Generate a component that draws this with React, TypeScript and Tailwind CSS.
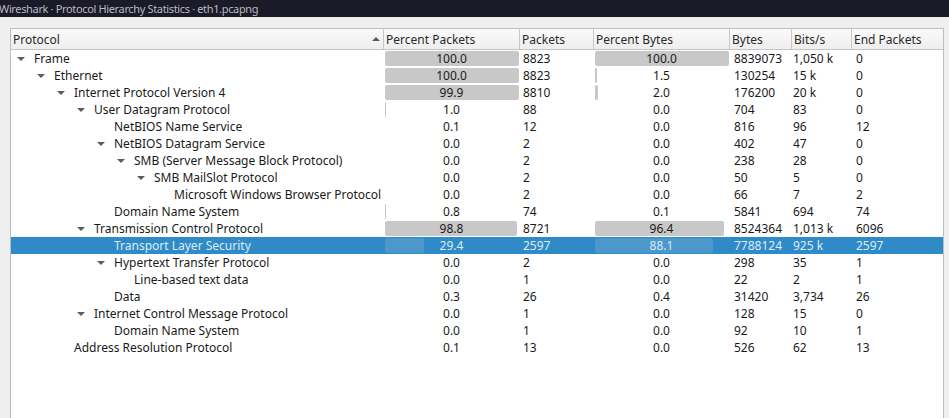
const COLUMNS = [
  { label: 'Packets', width: 'w-[74px]' },
  { label: 'Percent Bytes', width: 'w-[136px]' },
  { label: 'Bytes', width: 'w-[62px]' },
  { label: 'Bits/s', width: 'w-[60px]' },
  { label: 'End Packets', width: 'flex-1' },
];

type Row = {
  name: string;
  depth: number;
  open?: boolean;
  pctPackets: string;
  packets: string;
  pctBytes: string;
  bytes: string;
  bits: string;
  end: string;
  selected?: boolean;
};

const ROWS: Row[] = [
  { name: 'Frame', depth: 0, open: true, pctPackets: '100.0', packets: '8823', pctBytes: '100.0', bytes: '8839073', bits: '1,050 k', end: '0' },
  { name: 'Ethernet', depth: 1, open: true, pctPackets: '100.0', packets: '8823', pctBytes: '1.5', bytes: '130254', bits: '15 k', end: '0' },
  { name: 'Internet Protocol Version 4', depth: 2, open: true, pctPackets: '99.9', packets: '8810', pctBytes: '2.0', bytes: '176200', bits: '20 k', end: '0' },
  { name: 'User Datagram Protocol', depth: 3, open: true, pctPackets: '1.0', packets: '88', pctBytes: '0.0', bytes: '704', bits: '83', end: '0' },
  { name: 'NetBIOS Name Service', depth: 4, pctPackets: '0.1', packets: '12', pctBytes: '0.0', bytes: '816', bits: '96', end: '12' },
  { name: 'NetBIOS Datagram Service', depth: 4, open: true, pctPackets: '0.0', packets: '2', pctBytes: '0.0', bytes: '402', bits: '47', end: '0' },
  { name: 'SMB (Server Message Block Protocol)', depth: 5, open: true, pctPackets: '0.0', packets: '2', pctBytes: '0.0', bytes: '238', bits: '28', end: '0' },
  { name: 'SMB MailSlot Protocol', depth: 6, open: true, pctPackets: '0.0', packets: '2', pctBytes: '0.0', bytes: '50', bits: '5', end: '0' },
  { name: 'Microsoft Windows Browser Protocol', depth: 7, pctPackets: '0.0', packets: '2', pctBytes: '0.0', bytes: '66', bits: '7', end: '2' },
  { name: 'Domain Name System', depth: 4, pctPackets: '0.8', packets: '74', pctBytes: '0.1', bytes: '5841', bits: '694', end: '74' },
  { name: 'Transmission Control Protocol', depth: 3, open: true, pctPackets: '98.8', packets: '8721', pctBytes: '96.4', bytes: '8524364', bits: '1,013 k', end: '6096' },
  { name: 'Transport Layer Security', depth: 4, selected: true, pctPackets: '29.4', packets: '2597', pctBytes: '88.1', bytes: '7788124', bits: '925 k', end: '2597' },
  { name: 'Hypertext Transfer Protocol', depth: 4, open: true, pctPackets: '0.0', packets: '2', pctBytes: '0.0', bytes: '298', bits: '35', end: '1' },
  { name: 'Line-based text data', depth: 5, pctPackets: '0.0', packets: '1', pctBytes: '0.0', bytes: '22', bits: '2', end: '1' },
  { name: 'Data', depth: 4, pctPackets: '0.3', packets: '26', pctBytes: '0.4', bytes: '31420', bits: '3,734', end: '26' },
  { name: 'Internet Control Message Protocol', depth: 3, open: true, pctPackets: '0.0', packets: '1', pctBytes: '0.0', bytes: '128', bits: '15', end: '0' },
  { name: 'Domain Name System', depth: 4, pctPackets: '0.0', packets: '1', pctBytes: '0.0', bytes: '92', bits: '10', end: '1' },
  { name: 'Address Resolution Protocol', depth: 2, pctPackets: '0.1', packets: '13', pctBytes: '0.0', bytes: '526', bits: '62', end: '13' },
];

function BarCell({ value, selected }: { value: string; selected?: boolean }) {
  const pct = parseFloat(value);
  return (
    <div className="relative flex h-full w-[137px] items-center justify-center">
      {pct > 0.5 && (
        <span
          className={`absolute bottom-px left-0.5 top-px rounded-[2px] ${selected ? 'bg-[#4c98cb]' : 'bg-[#c8c8c8]'}`}
          style={{ width: `${Math.max(pct * 1.34, 1)}px` }}
        />
      )}
      <span className="relative">{value}</span>
    </div>
  );
}

function TableRow({ row }: { row: Row }) {
  const rowColor = row.selected ? 'bg-[#2e8bc7] text-[#dcebf5]' : 'text-[#1a1a1a]';
  return (
    <div className={`flex h-[17px] items-center ${rowColor}`}>
      <div className="flex h-full w-[372px] items-center" style={{ paddingLeft: row.depth * 20 }}>
        <span className="flex w-[23px] justify-end pr-[9px]">
          {row.open && (
            <svg width="8" height="4" viewBox="0 0 8 4">
              <path d="M0 0h8L4 4z" fill="#5c5c5c" />
            </svg>
          )}
        </span>
        <span className="whitespace-nowrap">{row.name}</span>
      </div>
      <BarCell value={row.pctPackets} selected={row.selected} />
      <div className="w-[73px] pl-[3px]">{row.packets}</div>
      <BarCell value={row.pctBytes} selected={row.selected} />
      <div className="w-[62px] pl-[4px]">{row.bytes}</div>
      <div className="w-[60px] pl-[1px]">{row.bits}</div>
      <div className="flex-1 pl-[4px]">{row.end}</div>
    </div>
  );
}

export default function App() {
  return (
    <div className="flex h-[418px] w-[949px] flex-col overflow-hidden bg-[#efefef] font-['Noto_Sans',sans-serif] text-[12px] leading-[17px]">
      <div className="flex h-[17px] items-center bg-[#1a1a28] text-[#b9b9be]">
        <span className="-ml-px whitespace-nowrap text-[11px] tracking-[-0.35px]">Wireshark · Protocol Hierarchy Statistics · eth1.pcapng</span>
      </div>
      <div className="flex-1 pl-2.5 pr-[5px] pt-[11px]">
        <div className="h-full border border-b-0 border-[#bdbdbd] bg-white">
          <div className="flex h-[21px] border-b border-[#c4c4c4] bg-gradient-to-b from-[#fafafa] to-[#eeeeee] text-[#2a2a2a]">
            <div className="flex w-[373px] items-center justify-between border-r border-[#c8c8c8] pl-[2px] pr-[3px]">
              <span>Protocol</span>
              <svg width="8" height="4" viewBox="0 0 8 4">
                <path d="M0 4h8L4 0z" fill="#5c5c5c" />
              </svg>
            </div>
            <div className="flex w-[136px] items-center border-r border-[#c8c8c8] pl-[2px]">Percent Packets</div>
            {COLUMNS.map((col, i) => (
              <div
                key={col.label}
                className={`flex items-center pl-[2px] ${col.width} ${i < COLUMNS.length - 1 ? 'border-r border-[#c8c8c8]' : ''}`}
              >
                {col.label}
              </div>
            ))}
          </div>
          {ROWS.map((row, i) => (
            <TableRow key={i} row={row} />
          ))}
        </div>
      </div>
    </div>
  );
}
